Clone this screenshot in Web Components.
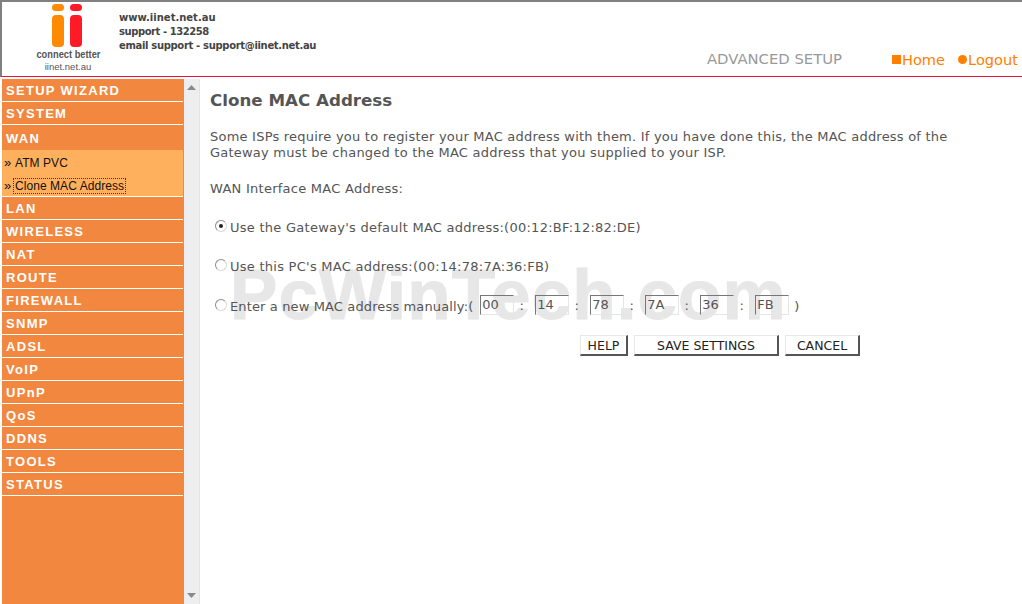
<!DOCTYPE html>
<html>
<head>
<meta charset="utf-8">
<title>Clone MAC Address</title>
<style>
	html, body { margin: 0; height: 100%; overflow: hidden; background: #fff; }
	body { display: flex; flex-direction: column; width: 1022px; height: 604px; font-family: "DejaVu Sans", sans-serif; }
	.main { display: flex; flex: 1; min-height: 0; padding: 2px 0 0 2px; }
</style>
</head>
<body>
<top-bar></top-bar>
<div class="main">
	<side-menu>
		<menu-item>SETUP WIZARD</menu-item>
		<menu-item>SYSTEM</menu-item>
		<menu-item open>WAN</menu-item>
		<sub-menu>
			<sub-item>ATM PVC</sub-item>
			<sub-item focused>Clone MAC Address</sub-item>
		</sub-menu>
		<menu-item>LAN</menu-item>
		<menu-item>WIRELESS</menu-item>
		<menu-item>NAT</menu-item>
		<menu-item>ROUTE</menu-item>
		<menu-item>FIREWALL</menu-item>
		<menu-item>SNMP</menu-item>
		<menu-item>ADSL</menu-item>
		<menu-item>VoIP</menu-item>
		<menu-item>UPnP</menu-item>
		<menu-item>QoS</menu-item>
		<menu-item>DDNS</menu-item>
		<menu-item>TOOLS</menu-item>
		<menu-item>STATUS</menu-item>
	</side-menu>
	<scroll-strip></scroll-strip>
	<clone-panel></clone-panel>
</div>

<script>
class TopBar extends HTMLElement {
	constructor() {
		super();
		const shadow = this.attachShadow({mode: 'open'});
		shadow.innerHTML = `
		<style>
			:host { display: flex; height: 74px; flex: none; border-top: 2px solid #808080; border-left: 2px solid #808080; border-bottom: 1px solid #e8143c; }
			.logo { width: 68px; margin: 0 17px 0 32px; flex: none; display: flex; flex-direction: column; align-items: center; font-family: "Liberation Sans", sans-serif; color: #555; white-space: nowrap; }
			.logo svg { display: block; margin: 2px 0 0 -1px; }
			.tag { font-size: 10px; font-weight: bold; line-height: 12px; margin: 1px 0 0 0; transform: scaleX(.93); }
			.site { font-size: 9.5px; line-height: 13px; margin-top: -1px; }
			.contact { font-family: "DejaVu Sans", sans-serif; font-size: 10px; font-weight: bold; line-height: 14px; color: #444; padding-top: 9px; white-space: nowrap; }
			.contact div { letter-spacing: -.33px; }
			.contact div:nth-child(2) { letter-spacing: -.44px; }
			.contact div:first-child { letter-spacing: 0; }
			.right { margin-left: auto; display: flex; align-items: baseline; height: 21px; padding-top: 48px; padding-right: 4px; white-space: nowrap; }
			.mode { color: #999; font-size: 14.8px; margin-right: 50px; }
			a { color: #ff8000; font-size: 14.6px; text-decoration: none; display: flex; align-items: center; }
			a + a { margin-left: 13px; }
			i { display: block; width: 9px; height: 9px; background: #ff8000; margin-right: 1px; }
			.dot { border-radius: 50%; }
		</style>
		<div class="logo">
			<svg width="34" height="44" viewBox="0 0 34 44">
				<rect x="1" y="0" width="12" height="7" rx="3.5" fill="#ff8a00"/>
				<rect x="1" y="11" width="12" height="32" rx="4" fill="#ff8a00"/>
				<rect x="19" y="0" width="12" height="7" rx="3.5" fill="#ff1a28"/>
				<rect x="19" y="11" width="12" height="32" rx="4" fill="#ff1a28"/>
			</svg>
			<div class="tag">connect better</div>
			<div class="site">iinet.net.au</div>
		</div>
		<div class="contact">
			<div>www.iinet.net.au</div>
			<div>support - 132258</div>
			<div>email support - support@iinet.net.au</div>
		</div>
		<div class="right">
			<span class="mode">ADVANCED SETUP</span>
			<a href="#"><i></i>Home</a>
			<a href="#"><i class="dot"></i>Logout</a>
		</div>`;
	}
}

class SideMenu extends HTMLElement {
	constructor() {
		super();
		const shadow = this.attachShadow({mode: 'open'});
		shadow.innerHTML = `
		<style>
			:host { display: block; width: 182px; flex: none; background: #f2873f; }
		</style>
		<slot></slot>`;
	}
}

class MenuItem extends HTMLElement {
	constructor() {
		super();
		const shadow = this.attachShadow({mode: 'open'});
		shadow.innerHTML = `
		<style>
			:host { display: block; height: 22px; margin-right: 1px; border-bottom: 1px solid #fff; padding-left: 4px; font: bold 13px/24px "Liberation Sans", sans-serif; letter-spacing: 1.3px; color: #fff; white-space: nowrap; }
			:host([open]) { height: 25px; line-height: 28px; border-bottom: 0; }
		</style>
		<slot></slot>`;
	}
}

class SubMenu extends HTMLElement {
	constructor() {
		super();
		const shadow = this.attachShadow({mode: 'open'});
		shadow.innerHTML = `
		<style>
			:host { display: block; height: 46px; margin-right: 1px; background: #ffb05c; border-bottom: 1px solid #fff; }
		</style>
		<slot></slot>`;
	}
}

class SubItem extends HTMLElement {
	constructor() {
		super();
		const shadow = this.attachShadow({mode: 'open'});
		shadow.innerHTML = `
		<style>
			:host { display: flex; align-items: center; height: 23px; padding-left: 2px; font: 12px "Liberation Sans", sans-serif; color: #111; white-space: nowrap; }
			.mark { width: 10px; flex: none; font-size: 13px; margin-top: 1px; }
			:host([focused]) .label { outline: 1px dotted #003c9c; outline-offset: 0; }
			.label { padding: 0 1px; line-height: 14px; margin-top: 3px; letter-spacing: .06px; }
		</style>
		<span class="mark">»</span><span class="label"><slot></slot></span>`;
	}
}

class ScrollStrip extends HTMLElement {
	constructor() {
		super();
		const shadow = this.attachShadow({mode: 'open'});
		shadow.innerHTML = `
		<style>
			:host { display: flex; flex-direction: column; justify-content: space-between; align-items: center; width: 15px; flex: none; background: #eeeeee; border-right: 1px solid #e4e4e4; padding: 6px 0; }
			svg { display: block; }
		</style>
		<svg width="9" height="5" viewBox="0 0 9 5"><path d="M4.5 0 L9 5 L0 5 Z" fill="#8a8a8a"/></svg>
		<svg width="9" height="5" viewBox="0 0 9 5"><path d="M0 0 L9 0 L4.5 5 Z" fill="#8a8a8a"/></svg>`;
	}
}

class RadioRow extends HTMLElement {
	constructor() {
		super();
		const shadow = this.attachShadow({mode: 'open'});
		shadow.innerHTML = `
		<style>
			:host { display: flex; align-items: center; height: 20px; white-space: nowrap; }
			.radio { width: 10px; height: 10px; flex: none; margin: -3px 3px 0 5px; border-radius: 50%; border: 1px solid #8c8c8c; border-right-color: #d8d8d8; border-bottom-color: #d8d8d8; background: #fff; display: flex; align-items: center; justify-content: center; }
			.radio b { width: 4px; height: 4px; border-radius: 50%; background: #222; display: none; }
			:host([checked]) .radio b { display: block; }
		</style>
		<span class="radio"><b></b></span><slot></slot>`;
	}
}

class MacField extends HTMLElement {
	static get observedAttributes() {
		return ['value'];
	}
	constructor() {
		super();
		const shadow = this.attachShadow({mode: 'open'});
		shadow.innerHTML = `
		<style>
			:host { display: block; width: 34px; height: 20px; flex: none; box-sizing: border-box; border: 1px solid #e6e6e6; border-top-color: #777; border-left-color: #777; padding: 0 0 0 1px; font: 13px/17px "DejaVu Sans", sans-serif; color: #555; letter-spacing: 0; }
		</style>
		<span class="val"></span>`;
	}
	attributeChangedCallback(name, oldValue, newValue) {
		this.shadowRoot.querySelector('.val').textContent = newValue;
	}
}

class PushButton extends HTMLElement {
	constructor() {
		super();
		const shadow = this.attachShadow({mode: 'open'});
		shadow.innerHTML = `
		<style>
			:host { display: flex; align-items: center; justify-content: center; height: 21px; box-sizing: border-box; background: #fff; border: 1px solid #e8e8e8; border-right: 2px solid #555; border-bottom: 2px solid #555; font: 12.5px "DejaVu Sans", sans-serif; color: #222; white-space: nowrap; letter-spacing: 0; }
		</style>
		<slot></slot>`;
	}
}

class ClonePanel extends HTMLElement {
	constructor() {
		super();
		const shadow = this.attachShadow({mode: 'open'});
		shadow.innerHTML = `
		<style>
			:host { display: block; position: relative; flex: 1; min-width: 0; box-sizing: border-box; padding: 11px 0 0 10px; color: #555; font: 13px "DejaVu Sans", sans-serif; letter-spacing: .26px; overflow: hidden; }
			h1 { margin: 0; font-size: 16.7px; line-height: 20px; font-weight: bold; color: #555; letter-spacing: 0; }
			p { margin: 0; line-height: 16px; }
			.intro { margin-top: 19px; width: 760px; letter-spacing: .22px; }
			.label { margin-top: 20px; }
			.opts { margin-top: 20px; position: relative; z-index: 1; }
			.opt { margin-bottom: 19px; }
			.opt:nth-child(2) { margin-bottom: 20px; }
			.manual { letter-spacing: .13px; }
			.sep { width: 21px; box-sizing: border-box; padding-right: 6px; text-align: center; }
			.fields { display: flex; align-items: center; margin: -2px 0 0 7px; }
			.close { margin-left: 5px; margin-top: 2px; }
			.btns { display: flex; gap: 6px; margin: 3px 0 0 370px; position: relative; z-index: 1; }
			.w { position: absolute; left: 30px; top: 171px; font: bold 71px/90px "Liberation Sans", sans-serif; color: #e7e7e7; -webkit-text-stroke: 1px #e7e7e7; white-space: nowrap; letter-spacing: 1.1px; }
		</style>
		<div class="w">PcWinTech.com</div>
		<h1>Clone MAC Address</h1>
		<p class="intro">Some ISPs require you to register your MAC address with them. If you have done this, the MAC address of the Gateway must be changed to the MAC address that you supplied to your ISP.</p>
		<p class="label">WAN Interface MAC Address:</p>
		<div class="opts">
			<radio-row class="opt" checked>Use the Gateway's default MAC address:(00:12:BF:12:82:DE)</radio-row>
			<radio-row class="opt">Use this PC's MAC address:(00:14:78:7A:36:FB)</radio-row>
			<radio-row class="opt manual">Enter a new MAC address manually:(
				<div class="fields">
					<mac-field value="00"></mac-field><span class="sep">:</span>
					<mac-field value="14"></mac-field><span class="sep">:</span>
					<mac-field value="78"></mac-field><span class="sep">:</span>
					<mac-field value="7A"></mac-field><span class="sep">:</span>
					<mac-field value="36"></mac-field><span class="sep">:</span>
					<mac-field value="FB"></mac-field><span class="close">)</span>
				</div>
			</radio-row>
		</div>
		<div class="btns">
			<push-button style="width:48px">HELP</push-button>
			<push-button style="width:145px">SAVE SETTINGS</push-button>
			<push-button style="width:75px">CANCEL</push-button>
		</div>`;
	}
}

customElements.define('top-bar', TopBar);
customElements.define('side-menu', SideMenu);
customElements.define('menu-item', MenuItem);
customElements.define('sub-menu', SubMenu);
customElements.define('sub-item', SubItem);
customElements.define('scroll-strip', ScrollStrip);
customElements.define('radio-row', RadioRow);
customElements.define('mac-field', MacField);
customElements.define('push-button', PushButton);
customElements.define('clone-panel', ClonePanel);
</script>
</body>
</html>
